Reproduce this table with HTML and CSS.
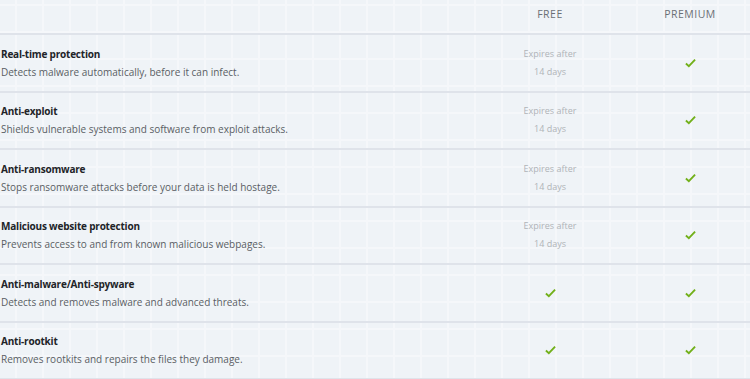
FILE: index.html
```html
<!DOCTYPE html>
<html lang="en">
<head>
    <meta charset="UTF-8">
    <title>Compare plans</title>
    <link rel="stylesheet" href="styles.css">
</head>
<body>
    <div class="compare">
        <div class="row head">
            <div></div>
            <div class="plan">Free</div>
            <div class="plan">Premium</div>
        </div>

        <div class="row">
            <div class="feature">
                <div class="name">Real-time protection</div>
                <div class="desc">Detects malware automatically, before it can infect.</div>
            </div>
            <div class="cell trial">Expires after<br>14 days</div>
            <div class="cell"><svg class="check" viewBox="0 0 12 10"><path d="M1 5.5 L4.2 8.5 L11 1.2"/></svg></div>
        </div>

        <div class="row">
            <div class="feature">
                <div class="name">Anti-exploit</div>
                <div class="desc">Shields vulnerable systems and software from exploit attacks.</div>
            </div>
            <div class="cell trial">Expires after<br>14 days</div>
            <div class="cell"><svg class="check" viewBox="0 0 12 10"><path d="M1 5.5 L4.2 8.5 L11 1.2"/></svg></div>
        </div>

        <div class="row">
            <div class="feature">
                <div class="name">Anti-ransomware</div>
                <div class="desc">Stops ransomware attacks before your data is held hostage.</div>
            </div>
            <div class="cell trial">Expires after<br>14 days</div>
            <div class="cell"><svg class="check" viewBox="0 0 12 10"><path d="M1 5.5 L4.2 8.5 L11 1.2"/></svg></div>
        </div>

        <div class="row">
            <div class="feature">
                <div class="name">Malicious website protection</div>
                <div class="desc">Prevents access to and from known malicious webpages.</div>
            </div>
            <div class="cell trial">Expires after<br>14 days</div>
            <div class="cell"><svg class="check" viewBox="0 0 12 10"><path d="M1 5.5 L4.2 8.5 L11 1.2"/></svg></div>
        </div>

        <div class="row">
            <div class="feature">
                <div class="name">Anti-malware/Anti-spyware</div>
                <div class="desc">Detects and removes malware and advanced threats.</div>
            </div>
            <div class="cell"><svg class="check" viewBox="0 0 12 10"><path d="M1 5.5 L4.2 8.5 L11 1.2"/></svg></div>
            <div class="cell"><svg class="check" viewBox="0 0 12 10"><path d="M1 5.5 L4.2 8.5 L11 1.2"/></svg></div>
        </div>

        <div class="row">
            <div class="feature">
                <div class="name">Anti-rootkit</div>
                <div class="desc">Removes rootkits and repairs the files they damage.</div>
            </div>
            <div class="cell"><svg class="check" viewBox="0 0 12 10"><path d="M1 5.5 L4.2 8.5 L11 1.2"/></svg></div>
            <div class="cell"><svg class="check" viewBox="0 0 12 10"><path d="M1 5.5 L4.2 8.5 L11 1.2"/></svg></div>
        </div>
    </div>
</body>
</html>
```

FILE: styles.css
```css
* {
    margin: 0;
    padding: 0;
    box-sizing: border-box;
}

body {
    font-family: 'Open Sans', 'Noto Sans', sans-serif;
    background-color: #eff3f7;
    background-image:
        linear-gradient(90deg, #f5f7fa 2px, transparent 2px),
        linear-gradient(180deg, #f5f7fa 2px, transparent 2px);
    background-size: 27px 27px;
    background-position: 15px 4px;
    overflow: hidden;
}

.compare {
    width: 750px;
}

.row {
    display: grid;
    grid-template-columns: 1fr 120px 120px;
    column-gap: 20px;
    align-items: center;
    height: 57.5px;
    border-bottom: 2px solid #dfe3ea;
}

.row.head {
    height: 35px;
    padding-bottom: 5px;
}

.plan {
    text-align: center;
    text-transform: uppercase;
    font-size: 10.5px;
    color: #6b6f75;
    letter-spacing: 0.5px;
}

.feature {
    padding-left: 1px;
}

.name {
    font-size: 10px;
    font-weight: 700;
    color: #222428;
    line-height: 18px;
    letter-spacing: -0.2px;
}

.desc {
    font-size: 10px;
    color: #5a5e64;
    line-height: 18px;
}

.cell {
    text-align: center;
    display: flex;
    justify-content: center;
}

.trial {
    display: block;
    font-size: 9px;
    color: #b0b3b7;
    line-height: 18px;
}

.check {
    width: 11px;
    height: 10px;
    fill: none;
    stroke: #72b01a;
    stroke-width: 2;
}
```
